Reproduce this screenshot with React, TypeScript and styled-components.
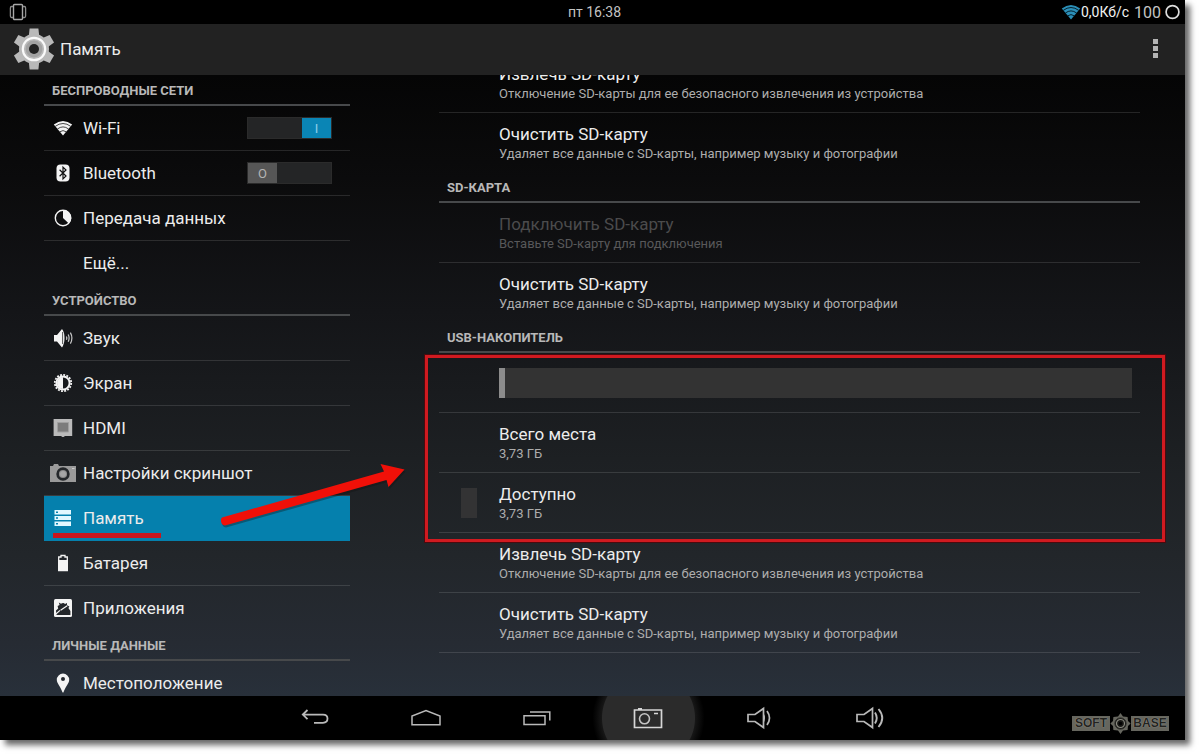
import React from "react";
import styled, { createGlobalStyle, css } from "styled-components";

const GlobalStyle = createGlobalStyle`
  *, *::before, *::after { box-sizing: border-box; }
  body {
    margin: 0;
    background: #fff;
    font-family: Roboto, "Noto Sans", sans-serif;
    color: #ececec;
  }
  button { font: inherit; color: inherit; background: none; border: 0; padding: 0; cursor: pointer; }
`;

const Page = styled.div`
  height: 100vh;
  padding: 0 15px 15px 0;
  overflow: hidden;
`;

const Screen = styled.div`
  display: flex;
  flex-direction: column;
  height: 100%;
  background: linear-gradient(#040404 8%, #0b0b0c 24%, #141518 42%, #1d2023 62%, #22262a 75%, #262b33 87%, #28303a 94%);
  box-shadow: 5px 5px 6px rgba(0, 0, 0, 0.6);
`;

const StatusBar = styled.header`
  display: grid;
  grid-template-columns: 1fr auto 1fr;
  align-items: center;
  flex: none;
  height: 24px;
  padding: 0 5px 0 9px;
  background: #000;
  font-size: 14px;
  color: #c4c4c4;
`;

const StatusGroup = styled.div`
  display: flex;
  align-items: center;
  justify-content: flex-end;
`;

const Speed = styled.span`
  margin-right: 5px;
  color: #f2f2f2;
`;

const Charge = styled.span`
  margin-right: 4px;
  font-size: 16px;
  color: #c4c4c4;
`;

const ActionBar = styled.div`
  display: flex;
  align-items: center;
  flex: none;
  height: 51px;
  padding: 0 24px 2px 13px;
  background: #222;
`;

const ScreenTitle = styled.h1`
  flex: 1;
  margin: 0 0 0 5px;
  font-size: 17px;
  font-weight: 400;
`;

const MoreButton = styled.button`
  display: flex;
  width: 12px;
  justify-content: center;
`;

const Body = styled.div`
  display: flex;
  flex: 1;
  min-height: 0;
  padding-top: 1px;
  overflow: hidden;
`;

const Sidebar = styled.nav`
  flex: none;
  width: 350px;
  padding-left: 44px;
`;

const SectionTitle = styled.h2`
  height: 30px;
  margin: 0;
  padding: 0 8px;
  border-bottom: 2px solid #47494b;
  font-size: 13px;
  font-weight: 700;
  line-height: 30px;
  text-transform: uppercase;
  color: #b8b8b8;
`;

const List = styled.ul`
  margin: 0;
  padding: 0;
  list-style: none;
`;

const divider = css`
  border-bottom: 1px solid rgba(255, 255, 255, 0.12);
`;

const NavItem = styled.li<{ $active?: boolean }>`
  position: relative;
  display: flex;
  align-items: center;
  height: 45px;
  padding-right: 18px;
  ${divider}
  ${(p) => p.$active && "background: #0580ad; border-color: #0580ad;"}
  &:last-child { border-color: transparent; }
`;

const NavLink = styled.a`
  display: grid;
  grid-template-columns: 39px 1fr;
  align-items: center;
  flex: 1;
  font-size: 17px;
  line-height: 20px;
  color: #ececec;
  text-decoration: none;
`;

const IconSlot = styled.span`
  display: flex;
  justify-content: center;
  width: 38px;
`;

const SwitchTrack = styled.label<{ $on?: boolean }>`
  position: relative;
  display: flex;
  justify-content: ${(p) => (p.$on ? "flex-end" : "flex-start")};
  width: 85px;
  height: 22px;
  border: 1px solid #2b2b2b;
  background: #242526;
  cursor: pointer;
`;

const SwitchInput = styled.input`
  position: absolute;
  inset: 0;
  margin: 0;
  opacity: 0;
`;

const SwitchThumb = styled.span<{ $on?: boolean }>`
  width: 29px;
  background: ${(p) => (p.$on ? "#0a85b5" : "#565656")};
  color: ${(p) => (p.$on ? "#8fd0ea" : "#b4b4b4")};
  font-size: 13px;
  line-height: 21px;
  text-align: center;
`;

const Underline = styled.span`
  position: absolute;
  left: 9px;
  bottom: 2px;
  width: 108px;
  height: 5px;
  background: #c8161d;
`;

const ArrowMark = styled.svg`
  position: absolute;
  z-index: 1;
  left: 171px;
  bottom: 8px;
  pointer-events: none;
`;

const Detail = styled.main`
  flex: 1;
  min-width: 0;
  padding: 0 45px 0 89px;
`;

/* The list is scrolled so that its first row is partly out of view. */
const ScrolledList = styled.div`
  margin-top: -23px;
`;

const SettingRow = styled.li`
  display: grid;
  grid-template-columns: 60px 1fr;
  align-items: center;
  height: 60px;
  ${divider}
`;

const OpenRow = styled(SettingRow)`
  border-color: transparent;
`;

const DisabledRow = styled(SettingRow)`
  color: #4b4b4c;
`;

const SettingText = styled.div`
  grid-column: 2;
  padding-top: 2px;
`;

const SettingTitle = styled.div`
  font-size: 17px;
  line-height: 20px;
`;

const SettingSummary = styled.div<{ $disabled?: boolean }>`
  font-size: 13px;
  line-height: 20px;
  color: ${(p) => (p.$disabled ? "#58585a" : "#adadad")};
`;

const Swatch = styled.span`
  width: 16px;
  height: 30px;
  margin-left: 22px;
  background: #333334;
`;

const Marked = styled.div`
  position: relative;
  &::after {
    content: "";
    position: absolute;
    inset: 2px -25px -9px -14px;
    border: 3px solid #d01a20;
    outline: 1px solid #4a0a0e;
    pointer-events: none;
  }
`;

const UsageTrack = styled.div`
  grid-column: 2;
  height: 30px;
  margin-right: 8px;
  background: #333;
`;

const UsageFill = styled.div`
  height: 100%;
  background: #8c8c8c;
`;

const SystemBar = styled.footer`
  position: relative;
  display: flex;
  justify-content: center;
  flex: none;
  height: 44px;
  overflow: hidden;
  background: #000;
`;

const SystemButton = styled.button<{ $pressed?: boolean }>`
  display: flex;
  align-items: center;
  justify-content: center;
  width: 111px;
  ${(p) => p.$pressed && "background: radial-gradient(circle, #2b2b2b 46px, #161616 47px, #000 56px);"}
`;

const Watermark = styled.div`
  position: absolute;
  right: 16px;
  bottom: 6px;
  display: flex;
  align-items: center;
  font-family: "Liberation Sans", Arial, sans-serif;
  font-size: 12px;
  font-weight: 700;
  line-height: 15px;
  color: #23231f;
`;

const Plate = styled.span`
  width: 38px;
  background: #66665e;
  text-align: center;
  text-shadow: 0 0 1px #b5b5a8;
`;

const WifiIcon = ({ size = 20, color = "#f4f4f4", line = "#333" }: { size?: number; color?: string; line?: string }) => (
  <svg width={size} height={size * 0.8} viewBox="0 0 20 16" aria-hidden="true">
    <path d="M10 15.5 L0.8 4.6 Q10-2.6 19.2 4.6 Z" fill={color} />
    <path d="M2.2 6.4 Q10 0.6 17.8 6.4 M4.4 9 Q10 4.8 15.6 9 M6.8 11.8 Q10 9.4 13.2 11.8" fill="none" stroke={line} strokeWidth="0.9" />
  </svg>
);

const BluetoothIcon = () => (
  <svg width="14" height="18" viewBox="0 0 14 18" aria-hidden="true">
    <rect x="0.5" y="0.5" width="13" height="17" rx="4" fill="#f4f4f4" />
    <path d="M3.6 5.8 L10 12 L7 14.9 V3.1 L10 6 L3.6 12.2" fill="none" stroke="#111" strokeWidth="1.2" />
  </svg>
);

const DataIcon = () => (
  <svg width="18" height="18" viewBox="0 0 18 18" aria-hidden="true">
    <circle cx="9" cy="9" r="7.7" fill="none" stroke="#f4f4f4" strokeWidth="1.4" />
    <path d="M9 9 V1 A8 8 0 0 1 14.8 14.6 Z" fill="#f4f4f4" />
  </svg>
);

const SoundIcon = () => (
  <svg width="20" height="20" viewBox="0 0 20 20" aria-hidden="true">
    <path d="M1 7 H4 L9 1 Q11.5 4 11.5 10 Q11.5 16 9 19.4 L4 13.6 H1 Z" fill="#f4f4f4" />
    <path d="M9.6 4 V16" stroke="#555" strokeWidth="1" />
    <path d="M13.4 8.4 Q14.2 10 13.4 11.8 M15.2 6.4 Q17 10 15.2 13.8 M17.4 4.6 Q20.4 10 17.4 15.6" fill="none" stroke="#c8c8c8" strokeWidth="1.2" />
  </svg>
);

const DisplayIcon = () => (
  <svg width="20" height="20" viewBox="0 0 20 20" aria-hidden="true">
    <circle cx="10" cy="10" r="8.2" fill="none" stroke="#f4f4f4" strokeWidth="1.8" strokeDasharray="1.9 1.32" />
    <circle cx="10" cy="10" r="6.6" fill="none" stroke="#f4f4f4" strokeWidth="2" />
    <path d="M10 4 A6 6 0 0 0 10 16 Z" fill="#f4f4f4" />
  </svg>
);

const HdmiIcon = () => (
  <svg width="20" height="20" viewBox="0 0 20 20" aria-hidden="true">
    <path d="M0.6 1 H19.2 V18 H12 L10.6 19 H9.4 L8 18 H0.6 Z" fill="#bababa" />
    <path d="M4.5 4.5 H15.5 V14 H4.5 Z" fill="#7c7c7c" stroke="#a0a0a0" strokeWidth="1" />
  </svg>
);

const CameraIcon = () => (
  <svg width="26" height="20" viewBox="0 0 26 20" aria-hidden="true">
    <path d="M0 3 H3 L4 1 H8 L9 3 H26 V19 H0 Z" fill="#9a9a9a" />
    <circle cx="13" cy="11" r="5.4" fill="#8a8a8a" stroke="#24272a" strokeWidth="2.6" />
    <circle cx="13" cy="11" r="3" fill="#a6a6a6" />
    <path d="M22 5.5 H24.5" stroke="#ccc" />
  </svg>
);

const StorageIcon = () => (
  <svg width="18" height="18" viewBox="0 0 18 18" aria-hidden="true">
    <path d="M0.5 1 H17 V5.4 H0.5 Z M0.5 7 H17 V11 H0.5 Z M0.5 12.6 H17 V17 H0.5 Z" fill="#e2f8ff" />
    <path d="M2 3.2 H4 M2 9 H4 M2 14.8 H4" stroke="#0580ad" strokeWidth="1.4" />
  </svg>
);

const BatteryIcon = () => (
  <svg width="12" height="18" viewBox="0 0 12 18" aria-hidden="true">
    <path d="M4 1.5 H8 V3 H10.3 V16.5 H1.7 V3 H4 Z" fill="none" stroke="#f4f4f4" strokeWidth="1.3" />
    <path d="M1 6 H11 V17 H1 Z" fill="#f4f4f4" />
  </svg>
);

const AppsIcon = () => (
  <svg width="20" height="20" viewBox="0 0 20 20" aria-hidden="true">
    <rect x="1" y="1" width="18" height="18" rx="1.5" fill="#f4f4f4" />
    <path d="M3 12.4 L5.2 10.4 L4.6 8 L6.6 7 L5.8 4.6 L8 5.8 Q10.4 4.2 12 6 L14 5 L14 7.2 L16.4 8.6 L15.4 10 L17.4 13 V17 H3.4 Z" fill="#23262a" />
    <path d="M2.6 16.2 L7 12.4 M7.6 12.2 L14.2 7.8" stroke="#f4f4f4" strokeWidth="1.2" />
  </svg>
);

const LocationIcon = () => (
  <svg width="14" height="20" viewBox="0 0 14 20" aria-hidden="true">
    <path d="M7 0.6 A6.2 6.2 0 0 1 13.2 6.8 C13.2 10.6 9.4 13.4 7.4 19.6 H6.6 C4.6 13.4 0.8 10.6 0.8 6.8 A6.2 6.2 0 0 1 7 0.6 Z" fill="#f4f4f4" />
    <circle cx="7" cy="6" r="2" fill="#25292f" />
  </svg>
);

const GearIcon = () => (
  <svg width="42" height="42" viewBox="-21 -21 42 42" aria-hidden="true">
    <g fill="#b9b9b9">
      {[0, 60, 120, 180, 240, 300].map((a) => (
        <path key={a} d="M-5.4 -11 L-4.4 -20.6 H4.4 L5.4 -11 Z" transform={`rotate(${a})`} />
      ))}
      <circle r="15" />
    </g>
    <circle r="8.4" fill="#a2a2a2" />
    <circle r="11.2" fill="none" stroke="#fafafa" strokeWidth="2.2" />
    <circle r="5" fill="#222" />
  </svg>
);

type Entry = { label: string; icon: React.ReactNode; on?: boolean; active?: boolean };

const wireless: Entry[] = [
  { label: "Wi-Fi", icon: <WifiIcon />, on: true },
  { label: "Bluetooth", icon: <BluetoothIcon />, on: false },
  { label: "Передача данных", icon: <DataIcon /> },
  { label: "Ещё...", icon: null },
];

const device: Entry[] = [
  { label: "Звук", icon: <SoundIcon /> },
  { label: "Экран", icon: <DisplayIcon /> },
  { label: "HDMI", icon: <HdmiIcon /> },
  { label: "Настройки скриншот", icon: <CameraIcon /> },
  { label: "Память", icon: <StorageIcon />, active: true },
  { label: "Батарея", icon: <BatteryIcon /> },
  { label: "Приложения", icon: <AppsIcon /> },
];

const personal: Entry[] = [{ label: "Местоположение", icon: <LocationIcon /> }];

const Toggle = ({ label, on }: { label: string; on: boolean }) => {
  const [checked, setChecked] = React.useState(on);
  return (
    <SwitchTrack $on={checked}>
      <SwitchInput type="checkbox" aria-label={label} checked={checked} onChange={() => setChecked(!checked)} />
      <SwitchThumb $on={checked}>{checked ? "I" : "O"}</SwitchThumb>
    </SwitchTrack>
  );
};

const arrowShape = "M7 61.5 L169 15.5 L165.5 8 L189.5 13.5 L173.5 31 L171.5 24 L10 69.5 Q5.5 69 6 63 Z";

const NavGroup = ({ title, items }: { title: string; items: Entry[] }) => (
  <section>
    <SectionTitle>{title}</SectionTitle>
    <List>
      {items.map((item) => (
        <NavItem key={item.label} $active={item.active}>
          <NavLink href="#" aria-current={item.active ? "page" : undefined}>
            <IconSlot>{item.icon}</IconSlot>
            {item.label}
          </NavLink>
          {item.on !== undefined && <Toggle label={item.label} on={item.on} />}
          {item.active && (
            <>
              <Underline />
              <ArrowMark width="196" height="76" viewBox="0 0 196 76" aria-hidden="true">
                <path d={arrowShape} fill="#111" opacity="0.35" transform="translate(1 2)" />
                <path d={arrowShape} fill="#f01008" />
              </ArrowMark>
            </>
          )}
        </NavItem>
      ))}
    </List>
  </section>
);

type SettingProps = { title: string; summary: string; disabled?: boolean; open?: boolean; swatch?: boolean };

const Setting = ({ title, summary, disabled, open, swatch }: SettingProps) => {
  const Row = disabled ? DisabledRow : open ? OpenRow : SettingRow;
  return (
    <Row>
      {swatch && <Swatch />}
      <SettingText>
        <SettingTitle>{title}</SettingTitle>
        <SettingSummary $disabled={disabled}>{summary}</SettingSummary>
      </SettingText>
    </Row>
  );
};

const ejectText = "Отключение SD-карты для ее безопасного извлечения из устройства";
const eraseText = "Удаляет все данные с SD-карты, например музыку и фотографии";

const stroke = { fill: "none", stroke: "#b9b9b9", strokeWidth: 1.5 };

export default function App() {
  return (
    <Page>
      <GlobalStyle />
      <Screen>
        <StatusBar>
          <svg width="18" height="18" viewBox="0 0 18 18" aria-hidden="true">
            <rect x="4.5" y="1.5" width="9" height="15" rx="1" fill="none" stroke="#a8a8a8" strokeWidth="1.4" />
            <path d="M4 3.5 H2.6 Q1.4 3.5 1.4 5 V13 Q1.4 14.5 2.6 14.5 H4 M14 3.5 H15.4 Q16.6 3.5 16.6 5 V13 Q16.6 14.5 15.4 14.5 H14" fill="none" stroke="#8c8c8c" strokeWidth="1.3" />
          </svg>
          <span>пт 16:38</span>
          <StatusGroup>
            <WifiIcon size={20} color="#2b8fb8" line="#00141d" />
            <Speed>0,0Кб/с</Speed>
            <Charge>100</Charge>
            <svg width="15" height="16" viewBox="0 0 15 16" aria-hidden="true">
              <circle cx="7.5" cy="8" r="6.4" fill="none" stroke="#ddd" strokeWidth="1.7" />
            </svg>
          </StatusGroup>
        </StatusBar>
        <ActionBar>
          <GearIcon />
          <ScreenTitle>Память</ScreenTitle>
          <MoreButton aria-label="Ещё">
            <svg width="5" height="19" viewBox="0 0 5 19" aria-hidden="true">
              <path d="M0 0 H5 V5 H0 Z M0 7 H5 V12 H0 Z M0 14 H5 V19 H0 Z" fill="#b4b4b4" />
            </svg>
          </MoreButton>
        </ActionBar>
        <Body>
          <Sidebar>
            <NavGroup title="Беспроводные сети" items={wireless} />
            <NavGroup title="Устройство" items={device} />
            <NavGroup title="Личные данные" items={personal} />
          </Sidebar>
          <Detail>
            <ScrolledList>
              <List>
                <Setting title="Извлечь SD-карту" summary={ejectText} />
                <Setting title="Очистить SD-карту" summary={eraseText} open />
              </List>
              <SectionTitle>SD-карта</SectionTitle>
              <List>
                <Setting title="Подключить SD-карту" summary="Вставьте SD-карту для подключения" disabled />
                <Setting title="Очистить SD-карту" summary={eraseText} open />
              </List>
              <SectionTitle>USB-накопитель</SectionTitle>
              <Marked>
                <List>
                  <SettingRow>
                    <UsageTrack role="meter" aria-label="Занято" aria-valuemin={0} aria-valuemax={100} aria-valuenow={1}>
                      <UsageFill style={{ width: "1%" }} />
                    </UsageTrack>
                  </SettingRow>
                  <Setting title="Всего места" summary="3,73 ГБ" />
                  <Setting title="Доступно" summary="3,73 ГБ" swatch />
                </List>
              </Marked>
              <List>
                <Setting title="Извлечь SD-карту" summary={ejectText} />
                <Setting title="Очистить SD-карту" summary={eraseText} />
              </List>
            </ScrolledList>
          </Detail>
        </Body>
        <SystemBar>
          <SystemButton aria-label="Назад">
            <svg width="28" height="18" viewBox="0 0 28 18" aria-hidden="true">
              <path d="M6.5 1 L1.8 5.6 L6.5 10.2 M2 5.6 H22 Q26.5 5.6 26.5 9.6 Q26.5 13.8 22 13.8 H13" {...stroke} strokeWidth={1.8} />
            </svg>
          </SystemButton>
          <SystemButton aria-label="Домой">
            <svg width="30" height="18" viewBox="0 0 30 18" aria-hidden="true">
              <path d="M1 15.8 V7 L15 1.6 L29 7 V15.8 Z" {...stroke} />
            </svg>
          </SystemButton>
          <SystemButton aria-label="Недавние">
            <svg width="28" height="18" viewBox="0 0 28 18" aria-hidden="true">
              <path d="M1 6.8 H22 V15.4 H1 Z M7 3 H26.8 V11.6" {...stroke} />
            </svg>
          </SystemButton>
          <SystemButton aria-label="Снимок экрана" $pressed>
            <svg width="30" height="22" viewBox="0 0 30 22" aria-hidden="true">
              <path d="M1.5 3 H28.5 V20.5 H1.5 Z M21 6.5 H25" {...stroke} stroke="#d6d6d6" strokeWidth={1.7} />
              <path d="M5 2 H9" stroke="#d6d6d6" strokeWidth="2" />
              <circle cx="11.5" cy="11.8" r="5" fill="none" stroke="#c4c4c4" strokeWidth="1.6" />
            </svg>
          </SystemButton>
          <SystemButton aria-label="Тише">
            <svg width="26" height="24" viewBox="0 0 26 24" aria-hidden="true">
              <path d="M2 8.5 H9 L17.5 2.5 V21.5 L9 15.5 H2 Z" {...stroke} strokeWidth={1.7} />
              <path d="M17.5 7 Q20.5 12 17.5 17 Z" fill="#b9b9b9" />
              <path d="M21 5 Q26 12 21 19" {...stroke} strokeWidth={1.7} />
            </svg>
          </SystemButton>
          <SystemButton aria-label="Громче">
            <svg width="30" height="24" viewBox="0 0 30 24" aria-hidden="true">
              <path d="M2 8.5 H9 L17.5 2.5 V21.5 L9 15.5 H2 Z" {...stroke} strokeWidth={1.7} />
              <path d="M20 6.5 Q23.5 12 20 17.5 M23.5 3 Q31 12 23.5 21" {...stroke} strokeWidth={1.9} />
            </svg>
          </SystemButton>
          <Watermark>
            <Plate>SOFT</Plate>
            <svg width="21" height="21" viewBox="0 0 21 21" aria-hidden="true">
              <path d="M10.5 0 L13 3.4 L17.6 4 L18 8 L20.6 10.5 L18 13 L17.6 17 L13 17.6 L10.5 21 L8 17.6 L3.4 17 L3 13 L0.4 10.5 L3 8 L3.4 4 L8 3.4 Z" fill="#66665e" />
              <circle cx="10.5" cy="10.5" r="5.6" fill="#1a1a17" stroke="#2a2a26" strokeWidth="1" />
              <circle cx="10.5" cy="10.5" r="4" fill="none" stroke="#8b8b81" strokeWidth="1.2" />
              <circle cx="10.5" cy="10.5" r="1.8" fill="#000" />
            </svg>
            <Plate>BASE</Plate>
          </Watermark>
        </SystemBar>
      </Screen>
    </Page>
  );
}
